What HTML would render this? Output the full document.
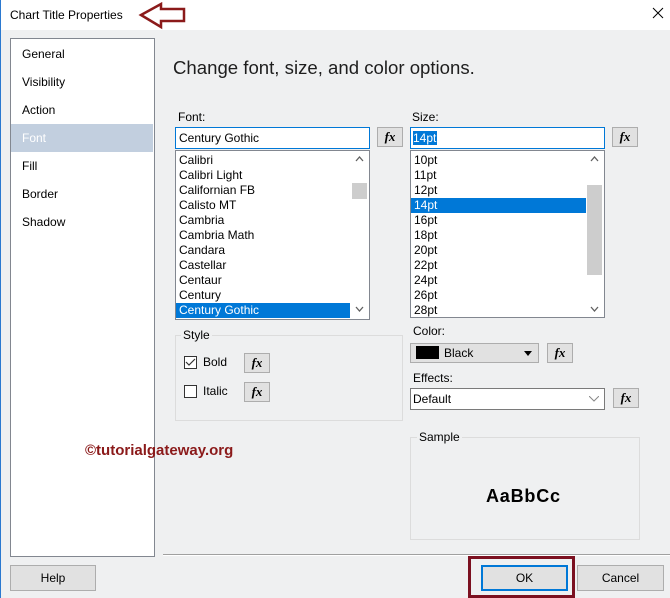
<!DOCTYPE html>
<html><head><style>
*{margin:0;padding:0;box-sizing:border-box}
body{width:670px;height:598px;background:#eff0f1;font-family:"Liberation Sans",sans-serif;font-size:12px;color:#000;position:relative;overflow:hidden}
.a{position:absolute}
.t{position:absolute;white-space:nowrap;line-height:15px}
.fx{position:absolute;width:26px;height:20px;background:#e1e1e1;border:1px solid #adadad;font-family:"Liberation Serif",serif;font-style:italic;font-weight:bold;font-size:13px;text-align:center;line-height:18px}
.btn{position:absolute;background:#e1e1e1;border:1px solid #adadad;text-align:center;font-size:12px}
.list{position:absolute;background:#fff;border:1px solid #828790;overflow:hidden}
.list div{height:15px;line-height:15px;padding-left:3px}
.sel{background:#0078d7;color:#fff}
.grp{position:absolute;border:1px solid #dcdcdc}
.lg{position:absolute;background:#eff0f1;padding:0 2px;line-height:14px}
</style></head><body>
<div class="a" style="left:0;top:0;width:670px;height:30px;background:#fff"></div>
<div class="a" style="left:0;top:0;width:1px;height:598px;background:#2b79d0"></div>
<div class="t" style="left:10px;top:8px;font-size:12px">Chart Title Properties</div>
<svg class="a" style="left:138px;top:2px" width="50" height="28"><path d="M3 13 L23 2 L23 7 L46 7 L46 19 L23 19 L23 25 Z" fill="none" stroke="#8b1a1a" stroke-width="2.5" stroke-linejoin="miter"/></svg>
<svg class="a" style="left:652px;top:7px" width="12" height="12"><path d="M1 1L11 11M11 1L1 11" stroke="#000" stroke-width="1"/></svg>

<div class="a" style="left:10px;top:38px;width:145px;height:519px;background:#fff;border:1px solid #828790"></div>
<div class="a" style="left:11px;top:124px;width:142px;height:28px;background:#c2cfdf"></div>
<div class="t" style="left:22px;top:47px">General</div>
<div class="t" style="left:22px;top:75px">Visibility</div>
<div class="t" style="left:22px;top:103px">Action</div>
<div class="t" style="left:22px;top:131px;color:#fff">Font</div>
<div class="t" style="left:22px;top:159px">Fill</div>
<div class="t" style="left:22px;top:187px">Border</div>
<div class="t" style="left:22px;top:215px">Shadow</div>

<div class="t" style="left:173px;top:57px;font-size:18.6px;line-height:22px;color:#1e1e1e">Change font, size, and color options.</div>

<div class="t" style="left:178px;top:110px">Font:</div>
<div class="a" style="left:175px;top:127px;width:195px;height:22px;background:#fff;border:1px solid #0078d7"></div>
<div class="t" style="left:179px;top:131px">Century Gothic</div>
<div class="fx" style="left:377px;top:127px">fx</div>
<div class="list" style="left:175px;top:150px;width:195px;height:170px;padding-top:2px">
<div>Calibri</div><div>Calibri Light</div><div>Californian FB</div><div>Calisto MT</div><div>Cambria</div><div>Cambria Math</div><div>Candara</div><div>Castellar</div><div>Centaur</div><div>Century</div><div class="sel" style="width:174px">Century Gothic</div>
</div>
<div class="a" style="left:352px;top:183px;width:15px;height:16px;background:#cdcdcd"></div>
<svg class="a" style="left:355px;top:156px" width="9" height="6"><path d="M1 5L4.5 1L8 5" stroke="#606060" fill="none" stroke-width="1.3"/></svg>
<svg class="a" style="left:355px;top:306px" width="9" height="6"><path d="M1 1L4.5 5L8 1" stroke="#606060" fill="none" stroke-width="1.3"/></svg>

<div class="t" style="left:412px;top:110px">Size:</div>
<div class="a" style="left:410px;top:127px;width:195px;height:22px;background:#fff;border:1px solid #0078d7"></div>
<div class="a" style="left:413px;top:131px;width:24px;height:14px;background:#0078d7"></div>
<div class="t" style="left:413px;top:131px;color:#fff">14pt</div>
<div class="fx" style="left:612px;top:127px">fx</div>
<div class="list" style="left:410px;top:150px;width:195px;height:168px;padding-top:2px">
<div>10pt</div><div>11pt</div><div>12pt</div><div class="sel" style="width:175px">14pt</div><div>16pt</div><div>18pt</div><div>20pt</div><div>22pt</div><div>24pt</div><div>26pt</div><div>28pt</div>
</div>
<div class="a" style="left:587px;top:185px;width:15px;height:90px;background:#cdcdcd"></div>
<svg class="a" style="left:590px;top:156px" width="9" height="6"><path d="M1 5L4.5 1L8 5" stroke="#606060" fill="none" stroke-width="1.3"/></svg>
<svg class="a" style="left:590px;top:306px" width="9" height="6"><path d="M1 1L4.5 5L8 1" stroke="#606060" fill="none" stroke-width="1.3"/></svg>

<div class="grp" style="left:175px;top:335px;width:228px;height:86px"></div>
<div class="lg" style="left:181px;top:328px">Style</div>
<div class="a" style="left:184px;top:356px;width:13px;height:13px;background:#fff;border:1px solid #333"></div>
<svg class="a" style="left:185px;top:357px" width="11" height="11"><path d="M1 5L4 8L10 2" stroke="#333" fill="none" stroke-width="1.2"/></svg>
<div class="t" style="left:203px;top:355px">Bold</div>
<div class="fx" style="left:244px;top:353px">fx</div>
<div class="a" style="left:184px;top:385px;width:13px;height:13px;background:#fff;border:1px solid #333"></div>
<div class="t" style="left:203px;top:384px">Italic</div>
<div class="fx" style="left:244px;top:382px">fx</div>

<div class="t" style="left:413px;top:324px">Color:</div>
<div class="a" style="left:410px;top:343px;width:129px;height:20px;background:#e1e1e1;border:1px solid #adadad"></div>
<div class="a" style="left:416px;top:346px;width:23px;height:13px;background:#000"></div>
<div class="t" style="left:444px;top:346px">Black</div>
<svg class="a" style="left:524px;top:351px" width="8" height="5"><path d="M0 0H8L4 5Z" fill="#000"/></svg>
<div class="fx" style="left:547px;top:343px">fx</div>
<div class="t" style="left:413px;top:371px">Effects:</div>
<div class="a" style="left:410px;top:388px;width:195px;height:22px;background:#fff;border:1px solid #7a7a7a"></div>
<div class="t" style="left:413px;top:392px">Default</div>
<svg class="a" style="left:589px;top:396px" width="10" height="6"><path d="M0 0L5 5L10 0" stroke="#888" fill="none"/></svg>
<div class="fx" style="left:613px;top:388px">fx</div>

<div class="grp" style="left:410px;top:437px;width:230px;height:103px"></div>
<div class="lg" style="left:417px;top:430px">Sample</div>
<div class="t" style="left:486px;top:486px;font-size:18px;line-height:20px;font-weight:bold;letter-spacing:0.8px">AaBbCc</div>

<div class="t" style="left:85px;top:443px;font-size:15px;font-weight:bold;color:#8b1a1a">©tutorialgateway.org</div>

<div class="a" style="left:163px;top:554px;width:507px;height:1px;background:#a0a0a0"></div>
<div class="a" style="left:163px;top:555px;width:507px;height:1px;background:#fff"></div>
<div class="btn" style="left:10px;top:565px;width:86px;height:26px;line-height:24px">Help</div>
<div class="a" style="left:468px;top:556px;width:107px;height:42px;border:3px solid #7b1020"></div>
<div class="btn" style="left:481px;top:565px;width:87px;height:26px;line-height:22px;border:2px solid #0078d7">OK</div>
<div class="btn" style="left:577px;top:565px;width:87px;height:26px;line-height:24px">Cancel</div>
</body></html>
